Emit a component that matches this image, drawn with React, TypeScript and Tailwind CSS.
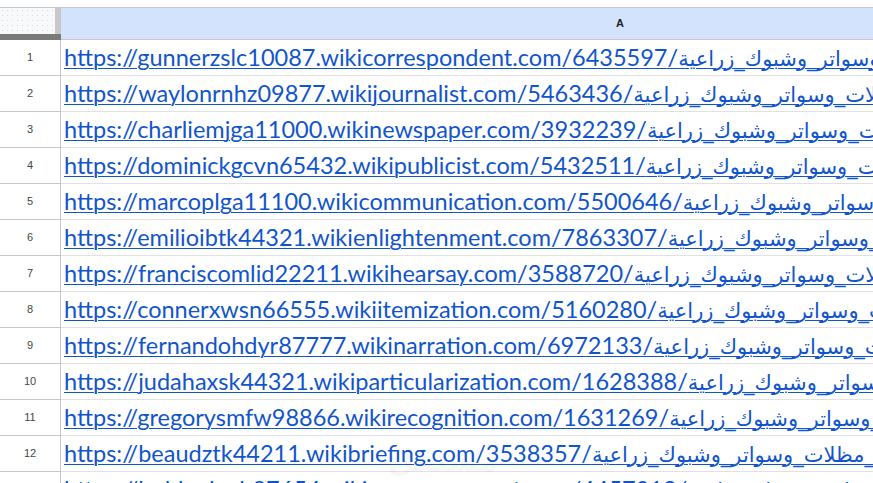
import React from "react";

const AR = "تركيب_مظلات_وسواتر_وشبوك_زراعية";

const urls = [
  "https://gunnerzslc10087.wikicorrespondent.com/6435597/",
  "https://waylonrnhz09877.wikijournalist.com/5463436/",
  "https://charliemjga11000.wikinewspaper.com/3932239/",
  "https://dominickgcvn65432.wikipublicist.com/5432511/",
  "https://marcoplga11100.wikicommunication.com/5500646/",
  "https://emilioibtk44321.wikienlightenment.com/7863307/",
  "https://franciscomlid22211.wikihearsay.com/3588720/",
  "https://connerxwsn66555.wikiitemization.com/5160280/",
  "https://fernandohdyr87777.wikinarration.com/6972133/",
  "https://judahaxsk44321.wikiparticularization.com/1628388/",
  "https://gregorysmfw98866.wikirecognition.com/1631269/",
  "https://beaudztk44211.wikibriefing.com/3538357/",
  "https://holdenlqxb87654.wikiannouncement.com/4457012/",
];

export default function App() {
  return (
    <div className="relative w-[873px] h-[483px] overflow-hidden bg-white">
      <div className="h-[8px] border-b border-[#c7c7c7]" />
      <div className="flex h-[32px]">
        <div className="flex-none w-[61px] flex flex-col">
          <div className="flex flex-1">
            <div className="w-[55px] bg-[#f8f9fa] bg-[radial-gradient(#dadce0_0.6px,transparent_0.8px)] bg-[length:5px_5px]" />
            <div className="w-[6px] bg-[#c8c8c8]" />
          </div>
          <div className="h-[6px] bg-[#7a7a7a]" />
        </div>
        <div className="flex-none w-[1118px] bg-[#d3e3fd] border-b border-[#c7c7c7] flex items-center justify-center font-['Liberation_Sans',sans-serif] text-[11px] font-bold text-[#1f1f1f]">
          A
        </div>
      </div>
      {urls.map((u, i) => (
        <div key={i} className="flex h-[36px]">
          <div className="flex-none w-[61px] border-r border-b border-[#c7c7c7] flex items-center justify-center font-['Liberation_Sans',sans-serif] text-[11px] text-[#444746]">
            {i + 1}
          </div>
          <div className="flex-none w-[1118px] border-b border-[#e1e1e1] pl-[3px] overflow-hidden whitespace-nowrap font-['Lato','DejaVu_Sans',sans-serif] text-[23.5px] leading-[35px] text-[#1155cc] underline decoration-1 underline-offset-[2px]">
            {u}
            <span className="font-['DejaVu_Sans',sans-serif] text-[21px] leading-[20px]">{AR}</span>
          </div>
        </div>
      ))}
      <div className="absolute left-[388px] top-[438px] font-['DejaVu_Sans',sans-serif] text-[30px] font-bold text-[#000000]/[0.05] pointer-events-none">
        مستقل
      </div>
    </div>
  );
}
